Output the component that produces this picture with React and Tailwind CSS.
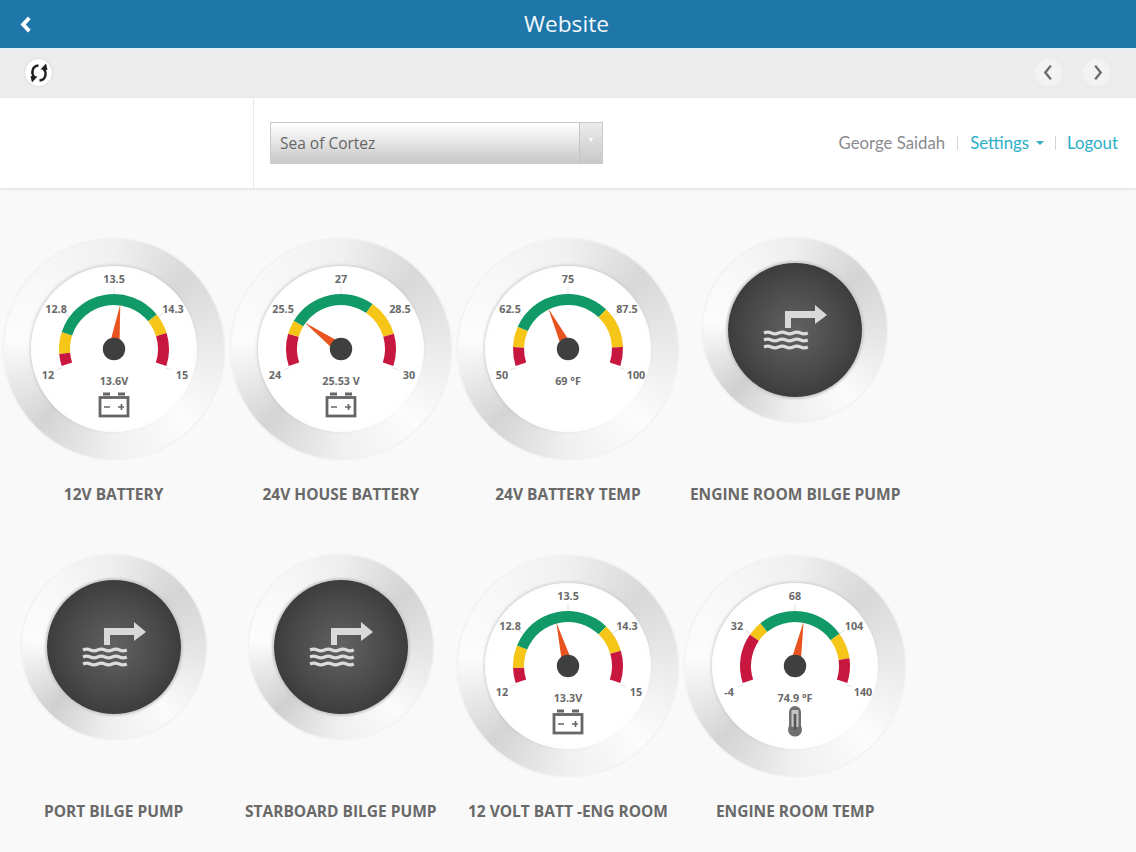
import React from "react";

const F = '"Open Sans", sans-serif';
const RED = "#c8173f", YEL = "#f5c518", GRN = "#119a68";

function pt(r, a) {
  const t = (a * Math.PI) / 180;
  return [r * Math.sin(t), -r * Math.cos(t)];
}
function seg(a, b) {
  const R = 55, r = 44;
  const [x1, y1] = pt(R, a), [x2, y2] = pt(R, b), [x3, y3] = pt(r, b), [x4, y4] = pt(r, a);
  const large = b - a > 180 ? 1 : 0;
  return `M${x1} ${y1}A${R} ${R} 0 ${large} 1 ${x2} ${y2}L${x3} ${y3}A${r} ${r} 0 ${large} 0 ${x4} ${y4}Z`;
}
function Battery() {
  return (
    <g fill="none" stroke="#666" strokeWidth="2.800">
      <rect x="-14" y="48.500" width="28" height="18.500" />
      <path d="M-11 45H-4M4 45H11" strokeWidth="2.800" />
      <path d="M-10 58H-4M4 58H10M7.500 55V61" strokeWidth="1.700" />
    </g>
  );
}
function Thermo() {
  return (
    <g>
      <path d="M-6 46a6 6 0 0 1 12 0V60a7 7 0 1 1-12 0Z" fill="#6f6f6f" />
      <rect x="-3.500" y="44" width="7" height="17" rx="1" fill="#c4c4c4" />
      <rect x="-1.300" y="48" width="2.600" height="16" fill="#555" />
    </g>
  );
}

function Gauge({ labels, value, stops, needle, icon }) {
  const [a, b, c, d] = stops;
  const [tx, ty] = pt(45, needle);
  const [bx, by] = pt(5.500, needle + 90);
  const pos = [[-66, 30], [-58, -36], [0, -66], [59, -36], [68, 30]];
  const tick = [[-110, 61], [-54, 62], [0, 62], [54, 62], [110, 61]];
  return (
    <div className="relative w-[220px] h-[220px] rounded-full shadow-[0_0_3px_rgba(0,0,0,0.1)] bg-[radial-gradient(circle,rgba(255,255,255,0)_78%,rgba(255,255,255,0.5)_100%),conic-gradient(#f0f0f0_0deg,#d8d8d8_45deg,#ebebeb_90deg,#fcfcfc_135deg,#f0f0f0_180deg,#d4d4d4_225deg,#fcfcfc_275deg,#f7f7f7_320deg,#f0f0f0_360deg)] flex items-center justify-center">
      <div className="w-[166px] h-[166px] rounded-full bg-[radial-gradient(circle,#ffffff_66%,#f4f4f4_94%,#ebebeb_100%)] shadow-[-1px_-1px_3px_0px_rgba(150,150,150,0.4)]" />
      <svg viewBox="-110 -110 220 220" className="absolute inset-0 w-[220px] h-[220px]">
        {tick.map(([ang, r], i) => {
          const [x1, y1] = pt(55, ang), [x2, y2] = pt(r, ang);
          return <line key={i} x1={x1} y1={y1} x2={x2} y2={y2} stroke="#d4d4d4" strokeWidth="0.700" />;
        })}
        <path d={seg(-108, a)} fill={RED} />
        <path d={seg(a, b)} fill={YEL} />
        <path d={seg(b, c)} fill={GRN} />
        <path d={seg(c, d)} fill={YEL} />
        <path d={seg(d, 108)} fill={RED} />
        <polygon points={`${tx},${ty} ${bx},${by} ${-bx},${-by}`} fill="#e8531f" />
        <circle cx="0" cy="0" r="11.200" fill="#3f3f3f" />
        <g fontFamily={F} fontWeight="700" fontSize="10.800" fill="#696969" textAnchor="middle">
          {labels.map((l, i) => (
            <text key={i} x={pos[i][0]} y={pos[i][1]}>{l}</text>
          ))}
          <text x="0" y="36">{value}</text>
        </g>
        {icon === "battery" && <Battery />}
        {icon === "thermo" && <Thermo />}
      </svg>
    </div>
  );
}

function Pump() {
  return (
    <div className="-mt-px w-[184px] h-[184px] rounded-full shadow-[0_0_3px_rgba(0,0,0,0.1)] bg-[radial-gradient(circle,rgba(255,255,255,0)_74%,rgba(255,255,255,0.5)_100%),conic-gradient(#eeeeee_0deg,#d4d4d4_50deg,#e6e6e6_95deg,#fbfbfb_140deg,#eeeeee_185deg,#d0d0d0_225deg,#fcfcfc_275deg,#f7f7f7_320deg,#eeeeee_360deg)] flex items-center justify-center">
      <div className="w-[134px] h-[134px] pb-[4px] rounded-full flex items-center justify-center bg-[radial-gradient(circle,#626262_0%,#494949_50%,#2b2b2b_100%)] shadow-[0_0_2px_2px_rgba(200,200,200,0.9)]">
        <svg viewBox="-34 -26 68 52" className="w-[68px] h-[52px]">
          <path d="M-10 0V-17H20V-23L32 -13L20 -4V-10H-4V0Z" fill="#d9d9d9" />
          <g fill="none" stroke="#dcdcdc" strokeWidth="3.200">
            <path d="M-31 5q3.700 -1.600 7.300 0t7.300 0t7.300 0t7.300 0t7.300 0t7.300 0" />
            <path d="M-31 12q3.700 -1.600 7.300 0t7.300 0t7.300 0t7.300 0t7.300 0t7.300 0" />
            <path d="M-31 19q3.700 -1.600 7.300 0t7.300 0t7.300 0t7.300 0t7.300 0t7.300 0" />
          </g>
        </svg>
      </div>
    </div>
  );
}

const items = [
  { t: "12V BATTERY", g: { labels: ["12", "12.8", "13.5", "14.3", "15"], value: "13.6V", stops: [-95, -72, 51, 73], needle: 8, icon: "battery" } },
  { t: "24V HOUSE BATTERY", g: { labels: ["24", "25.5", "27", "28.5", "30"], value: "25.53 V", stops: [-74, -59, 35, 74], needle: -54, icon: "battery" } },
  { t: "24V BATTERY TEMP", g: { labels: ["50", "62.5", "75", "87.5", "100"], value: "69 °F", stops: [-88, -66, 44, 88], needle: -26 } },
  { t: "ENGINE ROOM BILGE PUMP" },
  { t: "PORT BILGE PUMP" },
  { t: "STARBOARD BILGE PUMP" },
  { t: "12 VOLT BATT -ENG ROOM", g: { labels: ["12", "12.8", "13.5", "14.3", "15"], value: "13.3V", stops: [-92, -68, 44, 74], needle: -15, icon: "battery" } },
  { t: "ENGINE ROOM TEMP", g: { labels: ["-4", "32", "68", "104", "140"], value: "74.9 °F", stops: [-55, -39, 54, 82], needle: 11, icon: "thermo" } },
];

function RefreshHalf({ rot }) {
  return (
    <g transform={`rotate(${rot})`}>
      <path d="M-0.500 -7.500C-6.500 -7 -8.500 -0.500 -4.500 4.500" fill="none" stroke="#1f1f1f" strokeWidth="2.400" />
      <path d="M-8.500 3L-1.500 3.500L-7 9.500Z" fill="#1f1f1f" />
    </g>
  );
}

export default function App() {
  return (
    <div className="w-[1136px] h-[852px] overflow-hidden bg-[#f9f9f9]" style={{ fontFamily: F }}>
      <header className="h-[48px] bg-[#1f76a8] relative flex items-center justify-center">
        <svg viewBox="0 0 12 18" className="absolute left-[20px] top-[16px] w-[12px] h-[17px]">
          <path d="M9.500 2L3 9L9.500 16" fill="none" stroke="#fff" strokeWidth="4" />
        </svg>
        <span className="text-[22.700px] leading-none text-[#f2f8fb] -ml-[3px]">Website</span>
      </header>
      <div className="h-[2px] bg-[#e6f1f5]" />
      <div className="h-[48px] bg-[#ececec] flex items-center justify-between pl-[25px] pr-[26px] pb-[3px]">
        <button className="w-[27px] h-[27px] rounded-full bg-white flex items-center justify-center shadow-[0_0_2px_rgba(0,0,0,0.2)]">
          <svg viewBox="-12 -12 24 24" className="w-[24px] h-[24px]">
            <RefreshHalf rot={0} />
            <RefreshHalf rot={180} />
          </svg>
        </button>
        <div className="flex gap-[21px]">
          {["M14 5L8 12.500L14 20", "M10 5L16 12.500L10 20"].map((d) => (
            <button key={d} className="w-[27px] h-[27px] rounded-full bg-[#f3f3f3] flex items-center justify-center">
              <svg viewBox="0 0 24 25" className="w-[22px] h-[23px]" fill="none" stroke="#6b6b6b" strokeWidth="2.600"><path d={d} /></svg>
            </button>
          ))}
        </div>
      </div>
      <div className="h-[90px] bg-white flex shadow-[0_1px_3px_rgba(0,0,0,0.12)] relative">
        <div className="w-[254px] border-r border-[#e8e8e8]" />
        <div className="flex-1 flex items-center justify-between pl-[16px] pr-[18px]">
          <div className="w-[333px] h-[42px] flex items-stretch border border-[#c9c9c9] bg-[linear-gradient(#ffffff_0%,#f0f0f0_30%,#cfcfcf_85%,#cccccc_100%)]">
            <div className="flex-1 flex items-center pl-[9px] pt-[2px] text-[15.500px] text-[#666]">Sea of Cortez</div>
            <div className="w-[23px] flex justify-center pt-[15px] border-l border-[#c4c4c4] bg-[linear-gradient(#ececec,#c8c8c8)]">
              <div className="w-0 h-0 border-l-[2.500px] border-r-[2.500px] border-t-[4px] border-l-transparent border-r-transparent border-t-white" />
            </div>
          </div>
          <div className="flex items-center text-[16.800px] font-['Lato',sans-serif]">
            <span className="text-[#8a8a8f]">George Saidah</span>
            <span className="w-px h-[14px] bg-[#d4d4d4] mx-[12px]" />
            <span className="text-[#2aafc6]">Settings</span>
            <span className="ml-[7px] w-0 h-0 border-l-[4px] border-r-[4px] border-t-[4px] border-l-transparent border-r-transparent border-t-[#2aafc6]" />
            <span className="w-px h-[14px] bg-[#d4d4d4] mx-[11px]" />
            <span className="text-[#2aafc6]">Logout</span>
          </div>
        </div>
      </div>
      <main className="grid grid-cols-[repeat(4,227.2px)] pt-[51px]">
        {items.map((it) => (
          <div key={it.t} className="h-[317px] flex flex-col items-center">
            <div className="h-[245px] flex justify-center">
              {it.g ? <Gauge {...it.g} /> : <Pump />}
            </div>
            <div className="text-[15.500px] leading-[20px] font-bold text-[#696969] whitespace-nowrap">{it.t}</div>
          </div>
        ))}
      </main>
    </div>
  );
}
